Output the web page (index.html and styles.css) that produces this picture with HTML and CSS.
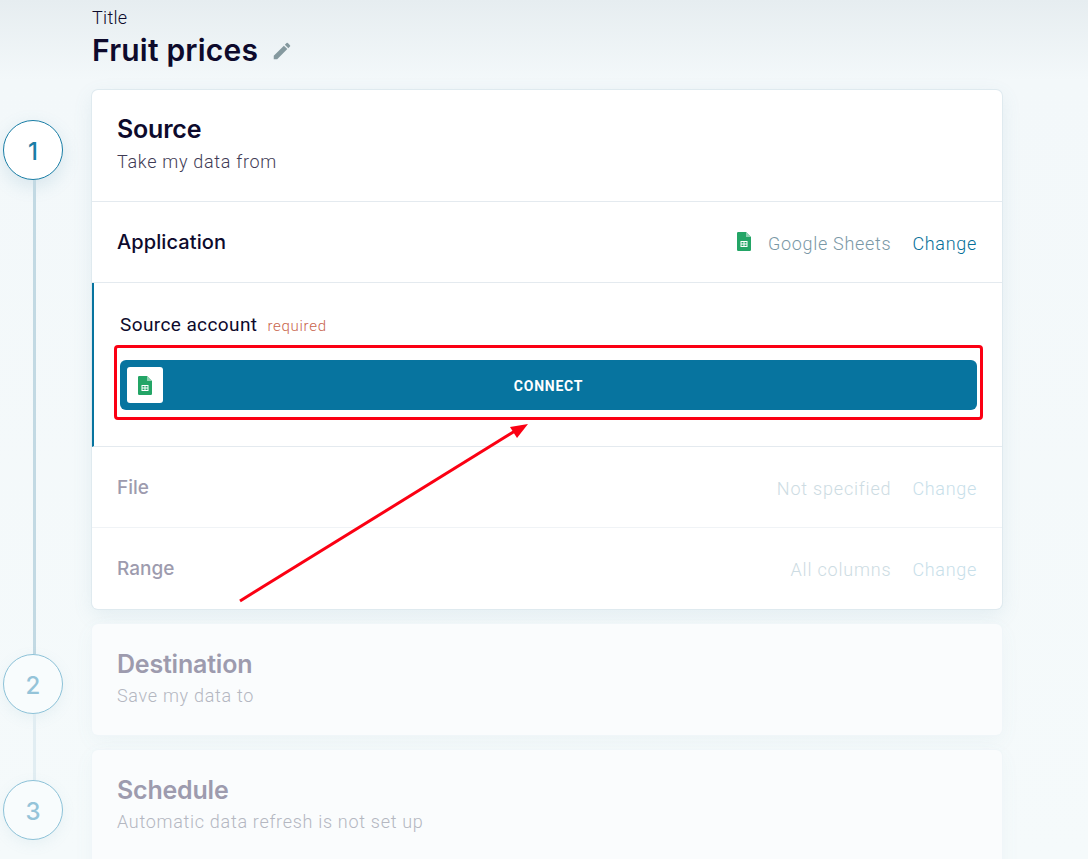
FILE: index.html
```html
<!DOCTYPE html>
<html lang="en">
<head>
<meta charset="utf-8">
<title>Fruit prices</title>
<link rel="stylesheet" href="styles.css">
</head>
<body>
<div class="page">
  <header class="title-block">
    <div class="title-label">Title</div>
    <div class="title-row">
      <h1 class="title">Fruit prices</h1>
      <svg class="pencil" width="22" height="22" viewBox="0 0 24 24"><path d="M3 17.25V21h3.750L17.810 9.940l-3.750-3.750L3 17.250zM20.710 7.040a1 1 0 0 0 0-1.410l-2.340-2.340a1 1 0 0 0-1.410 0l-1.830 1.830 3.750 3.750 1.830-1.830z"/></svg>
    </div>
  </header>
  <div class="flow">
    <div class="rail">
      <div class="step step-active">1</div>
      <div class="line line-one"></div>
      <div class="step">2</div>
      <div class="line line-two"></div>
      <div class="step">3</div>
    </div>
    <main class="cards">
      <section class="card">
        <div class="card-head">
          <h2 class="card-title">Source</h2>
          <p class="card-sub">Take my data from</p>
        </div>
        <div class="row row-app">
          <span class="row-label">Application</span>
          <span class="row-value">
            <svg class="sheet-icon" width="14" height="19" viewBox="0 0 14 19"><path fill="#23a566" d="M1.2 0H9l5 5v12.8a1.2 1.2 0 0 1-1.2 1.2H1.2A1.2 1.2 0 0 1 0 17.800V1.200A1.200 1.200 0 0 1 1.200 0z"/><path fill="#8ed1b1" d="M9 0l5 5H9z"/><path fill="#fff" d="M3.500 9h7v6h-7zM4.500 10v1.500h2V10zm3 0v1.500h2V10zm-3 2.500V14h2v-1.500zm3 0V14h2v-1.500z" fill-rule="evenodd"/></svg>
            <span class="app-name">Google Sheets</span>
            <a class="change">Change</a>
          </span>
        </div>
        <div class="account">
          <div class="account-label"><span>Source account</span><em class="required">required</em></div>
          <button class="connect">
            <span class="connect-icon">
              <svg width="14" height="19" viewBox="0 0 14 19"><path fill="#23a566" d="M1.2 0H9l5 5v12.8a1.2 1.2 0 0 1-1.2 1.2H1.2A1.2 1.2 0 0 1 0 17.800V1.200A1.200 1.200 0 0 1 1.200 0z"/><path fill="#8ed1b1" d="M9 0l5 5H9z"/><path fill="#fff" d="M3.500 9h7v6h-7zM4.500 10v1.500h2V10zm3 0v1.500h2V10zm-3 2.500V14h2v-1.500zm3 0V14h2v-1.500z" fill-rule="evenodd"/></svg>
            </span>
            <span class="connect-text">CONNECT</span>
          </button>
        </div>
        <div class="row row-muted row-file">
          <span class="row-label">File</span>
          <span class="row-value"><span class="muted-value">Not specified</span><a class="change">Change</a></span>
        </div>
        <div class="row row-muted">
          <span class="row-label row-label-up">Range</span>
          <span class="row-value"><span class="muted-value">All columns</span><a class="change">Change</a></span>
        </div>
      </section>
      <section class="card card-off">
        <h2 class="card-title">Destination</h2>
        <p class="card-sub">Save my data to</p>
      </section>
      <section class="card card-off">
        <h2 class="card-title">Schedule</h2>
        <p class="card-sub">Automatic data refresh is not set up</p>
      </section>
    </main>
  </div>
  <div class="mark-box"></div>
  <svg class="mark-arrow" width="320" height="200" viewBox="0 0 320 200"><path d="M7 185 L282 15" stroke="#fb0013" stroke-width="3" fill="none"/><path d="M295 8 L277 11 L284 22 Z" fill="#fb0013"/></svg>
</div>
</body>
</html>
```
FILE: styles.css
```css
* { box-sizing: border-box; }
html, body { margin: 0; height: 859px; overflow: hidden; }
body {
  background: linear-gradient(180deg, #e6edf0 0, #f3f8fa 80px, #f5fafb 100%);
  font-family: Roboto, "Liberation Sans", sans-serif;
  color: #0d0a2c;
}
.page { position: relative; height: 859px; overflow: hidden; }
.title-block { padding: 8px 0 0 92px; height: 90px; }
.title-label { font-size: 18px; line-height: 20px; font-weight: 300; letter-spacing: .3px; }
.title-row { display: flex; align-items: center; gap: 13px; height: 36px; margin-top: 4px; }
.title { margin: 0; font: 600 30px/36px Inter, sans-serif; letter-spacing: .2px; }
.pencil { fill: #85999f; margin-top: 2px; }
.flow { display: flex; }
.rail { width: 92px; padding: 30px 0 0 3px; display: flex; flex-direction: column; align-items: flex-start; }
.step {
  width: 60px; height: 60px; border-radius: 50%;
  border: 1px solid #8dc2d8; background: #f8fcfd;
  display: flex; align-items: center; justify-content: center;
  padding-top: 3px;
  font: 500 24px/1 Inter, sans-serif; color: #95c4d9;
  box-shadow: 0 4px 14px rgba(120,170,190,.1);
  flex: none;
}
.step-active { border-color: #1a7ea6; background: #fff; color: #1a7ea6; box-shadow: 0 6px 18px rgba(90,150,175,.18); }
.line { width: 3px; margin-left: 30px; flex: none; }
.line-one { height: 474px; background: #c2d9e3; }
.line-two { height: 66px; background: #e1edf2; }
.cards { width: 910px; display: flex; flex-direction: column; gap: 15px; }
.card {
  background: #fff; border-radius: 6px;
  box-shadow: 0 0 0 1px #dfeaef, 0 6px 20px rgba(100,150,175,.12);
}
.card-head { height: 112px; padding: 25px 25px 0; border-bottom: 1px solid #e4eaef; }
.card-title { margin: 0; font: 600 25px/28px Inter, sans-serif; letter-spacing: -.2px; }
.card-sub { margin: 8px 0 0; font-size: 18px; line-height: 22px; font-weight: 300; color: #3f3b55; letter-spacing: .7px; }
.row { height: 81px; padding: 2px 25px 0; display: flex; align-items: center; justify-content: space-between; }
.row-app { border-bottom: 1px solid #e4eaef; }
.row-app .row-label { margin-bottom: 2px; }
.row-file { border-bottom: 1px solid #f0f3f6; }
.row-label { font: 500 20px/24px Inter, sans-serif; letter-spacing: .1px; }
.row-value { display: flex; align-items: center; font-size: 18px; font-weight: 300; letter-spacing: .7px; }
.sheet-icon { margin: -3px 17px 0 0; }
.app-name { color: #7a98a6; margin-right: 21px; }
.change { color: #066f99; }
.account { height: 164px; padding: 30px 25px 0 26px; border-left: 2px solid #07749f; border-bottom: 1px solid #e4eaef; }
.account-label { display: flex; align-items: baseline; gap: 10px; font-size: 19px; line-height: 24px; letter-spacing: .4px; }
.required { font-style: normal; font-size: 15px; font-weight: 300; color: #c8644c; letter-spacing: .7px; }
.connect {
  margin: 22px 0 0; padding: 0 7px; width: 857px; height: 50px;
  border: 0; border-radius: 6px; background: #07749f;
  display: flex; align-items: center; position: relative;
}
.connect-icon { width: 36px; height: 36px; background: #fff; border-radius: 3px; display: flex; align-items: center; justify-content: center; flex: none; }
.connect-text { flex: 1; padding: 2px 36px 0 0; text-align: center; color: #fff; font: 700 14px/1 Roboto, sans-serif; letter-spacing: .75px; }
.row-muted .row-label { color: #9d9bae; font-size: 19px; font-weight: 500; letter-spacing: 0; }
.row-muted .row-label-up { margin-bottom: 2px; }
.row-muted .muted-value { color: #cddce3; margin-right: 21px; letter-spacing: .8px; }
.row-muted .change { color: #c8e0ea; }
.card-off { height: 111px; padding: 26px 25px 0; background: #fafcfd; box-shadow: 0 0 0 1px #f0f6f9, 0 6px 20px rgba(100,150,175,.06); }
.card-off .card-title { color: #9d9bae; }
.card-off .card-sub { color: #b4b7c1; margin-top: 7px; }
.card-off + .card-off { height: 130px; }
.mark-box { position: absolute; left: 114px; top: 345px; width: 869px; height: 75px; border: 3px solid #fb0013; border-radius: 4px; }
.mark-arrow { position: absolute; left: 233px; top: 416px; }
```
